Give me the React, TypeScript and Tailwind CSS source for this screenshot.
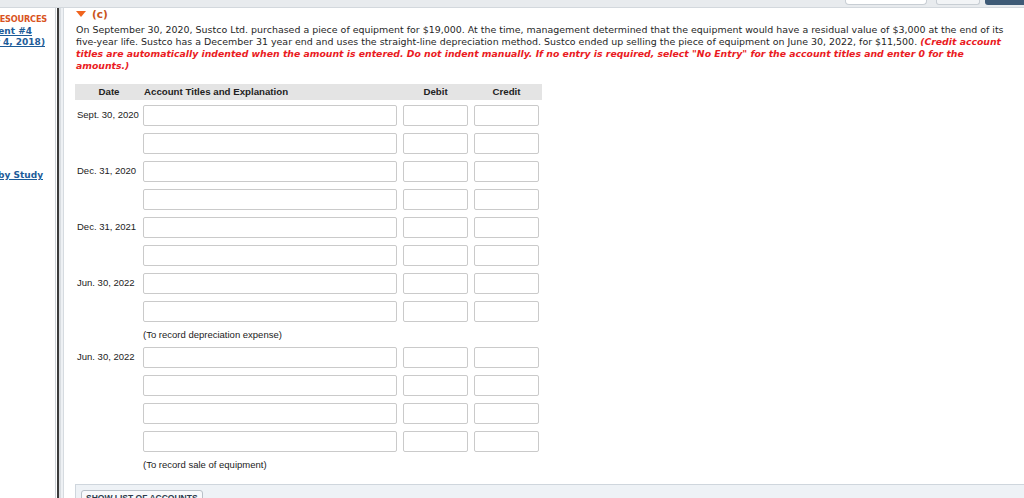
import React from "react";

type Entry = { date?: string; note?: string };

const entries: Entry[] = [
  { date: "Sept. 30, 2020" },
  {},
  { date: "Dec. 31, 2020" },
  {},
  { date: "Dec. 31, 2021" },
  {},
  { date: "Jun. 30, 2022" },
  {},
  { note: "(To record depreciation expense)" },
  { date: "Jun. 30, 2022" },
  {},
  {},
  {},
  { note: "(To record sale of equipment)" },
];

const box = "h-[21px] border border-[#cacaca] rounded-[2px] bg-white";
const warn = "font-bold italic text-[#ea1b23] text-[9.3px]";

function EntryRow({ entry }: { entry: Entry }) {
  if (entry.note) {
    return (
      <div className="pl-[68px] h-[11px] leading-[11px] text-[9.5px] text-[#222]">
        {entry.note}
      </div>
    );
  }
  return (
    <div className="flex items-center h-[21px]">
      <div className="w-[68px] pl-[2px] text-[9.5px] text-[#222] whitespace-nowrap">{entry.date}</div>
      <div className={`w-[254px] ${box}`} />
      <div className={`ml-[6px] w-[65px] ${box}`} />
      <div className={`ml-[6px] w-[65px] ${box}`} />
    </div>
  );
}

export default function App() {
  return (
    <div className="w-[1024px] h-[498px] overflow-hidden bg-white flex flex-col font-['DejaVu_Sans',Verdana,sans-serif]">
      {/* top strip */}
      <div className="h-[8px] shrink-0 bg-[#e8ebee] border-b border-[#d3d8dd] flex justify-end items-start">
        <div className="w-[82px] h-[5px] bg-white border border-t-0 border-[#c8ced4] rounded-b-[4px]" />
        <div className="ml-[9px] w-[44px] h-[5px] bg-[#f2f4f6] border border-t-0 border-[#c8ced4] rounded-b-[3px]" />
        <div className="ml-[5px] w-[39px] h-[5px] bg-[#3e5a76] rounded-bl-[3px]" />
      </div>

      <div className="flex flex-1 min-h-0">
        {/* sidebar, scrolled so only the ends of its lines show */}
        <div className="w-[55px] shrink-0 overflow-hidden flex flex-col items-end">
          <div className="mt-[5px] mr-[8px] leading-[12px] text-[8.2px] tracking-[-0.2px] font-bold text-[#d9531e] whitespace-nowrap">RESOURCES</div>
          <div className="mt-px mr-[23px] leading-[11px] text-[9px] font-bold text-[#1d5c99] underline whitespace-nowrap">Assignment #4</div>
          <div className="mr-[10px] leading-[11px] text-[9px] font-bold text-[#1d5c99] underline whitespace-nowrap">(November 4, 2018)</div>
          <div className="mt-[121px] mr-[12px] leading-[12px] text-[9px] font-bold text-[#1d5c99] underline whitespace-nowrap">Powered by Study</div>
        </div>

        {/* divider */}
        <div className="flex shrink-0">
          <div className="w-px bg-[#cdd2d7]" />
          <div className="w-px bg-white" />
          <div className="w-[2px] bg-[#3b3b3b]" />
          <div className="w-[2px] bg-[#d9dde1]" />
          <div className="w-[2px] bg-[#eef1f4]" />
          <div className="w-px bg-[#d6dbe0]" />
        </div>

        {/* main */}
        <div className="flex-1 min-w-0 pl-[11px] flex flex-col">
          <div className="flex items-center h-[12px] leading-[12px] ml-px">
            <span className="w-0 h-0 border-l-[5px] border-r-[5px] border-t-[6px] border-l-transparent border-r-transparent border-t-[#f0641e]" />
            <span className="ml-[6px] text-[10.5px] font-bold text-[#c9541c]">(c)</span>
          </div>

          <p className="mt-[4px] ml-px text-[9.45px] leading-[12px] text-[#1f1f1f] whitespace-nowrap">
            On September 30, 2020, Sustco Ltd. purchased a piece of equipment for $19,000. At the time, management determined that the equipment would have a residual value of $3,000 at the end of its
            <br />
            five-year life. Sustco has a December 31 year end and uses the straight-line depreciation method. Sustco ended up selling the piece of equipment on June 30, 2022, for $11,500.{" "}
            <span className={warn}>(Credit account</span>
            <br />
            <span className={warn}>
              titles are automatically indented when the amount is entered. Do not indent manually. If no entry is required, select "No Entry" for the account titles and enter 0 for the
            </span>
            <br />
            <span className={warn}>amounts.)</span>
          </p>

          {/* journal table */}
          <div className="mt-[12px] font-['Liberation_Sans',Arial,sans-serif]">
            <div className="w-[467px] h-[16px] bg-[#e4e4e4] flex items-center text-[9.7px] font-bold text-[#222]">
              <div className="w-[68px] text-center">Date</div>
              <div className="w-[254px] pl-px">Account Titles and Explanation</div>
              <div className="ml-[6px] w-[65px] text-center">Debit</div>
              <div className="ml-[6px] w-[65px] text-center">Credit</div>
            </div>
            <div className="mt-[5px] flex flex-col gap-[7px]">
              {entries.map((e, i) => (
                <EntryRow key={i} entry={e} />
              ))}
            </div>
          </div>

          <div className="mt-[14px] flex-1 bg-[#eef2f6] border-t border-l border-[#cfd6dd] pt-[5px] pl-[5px]">
            <div className="flex w-fit h-[16px] pt-[2px] px-[4px] leading-[10px] border border-[#b8c0c8] rounded-[3px] bg-[#f8f9fb] text-[8.5px] font-bold text-[#2c3b4c] font-['Liberation_Sans',Arial,sans-serif]">
              SHOW LIST OF ACCOUNTS
            </div>
          </div>
        </div>
      </div>
    </div>
  );
}
